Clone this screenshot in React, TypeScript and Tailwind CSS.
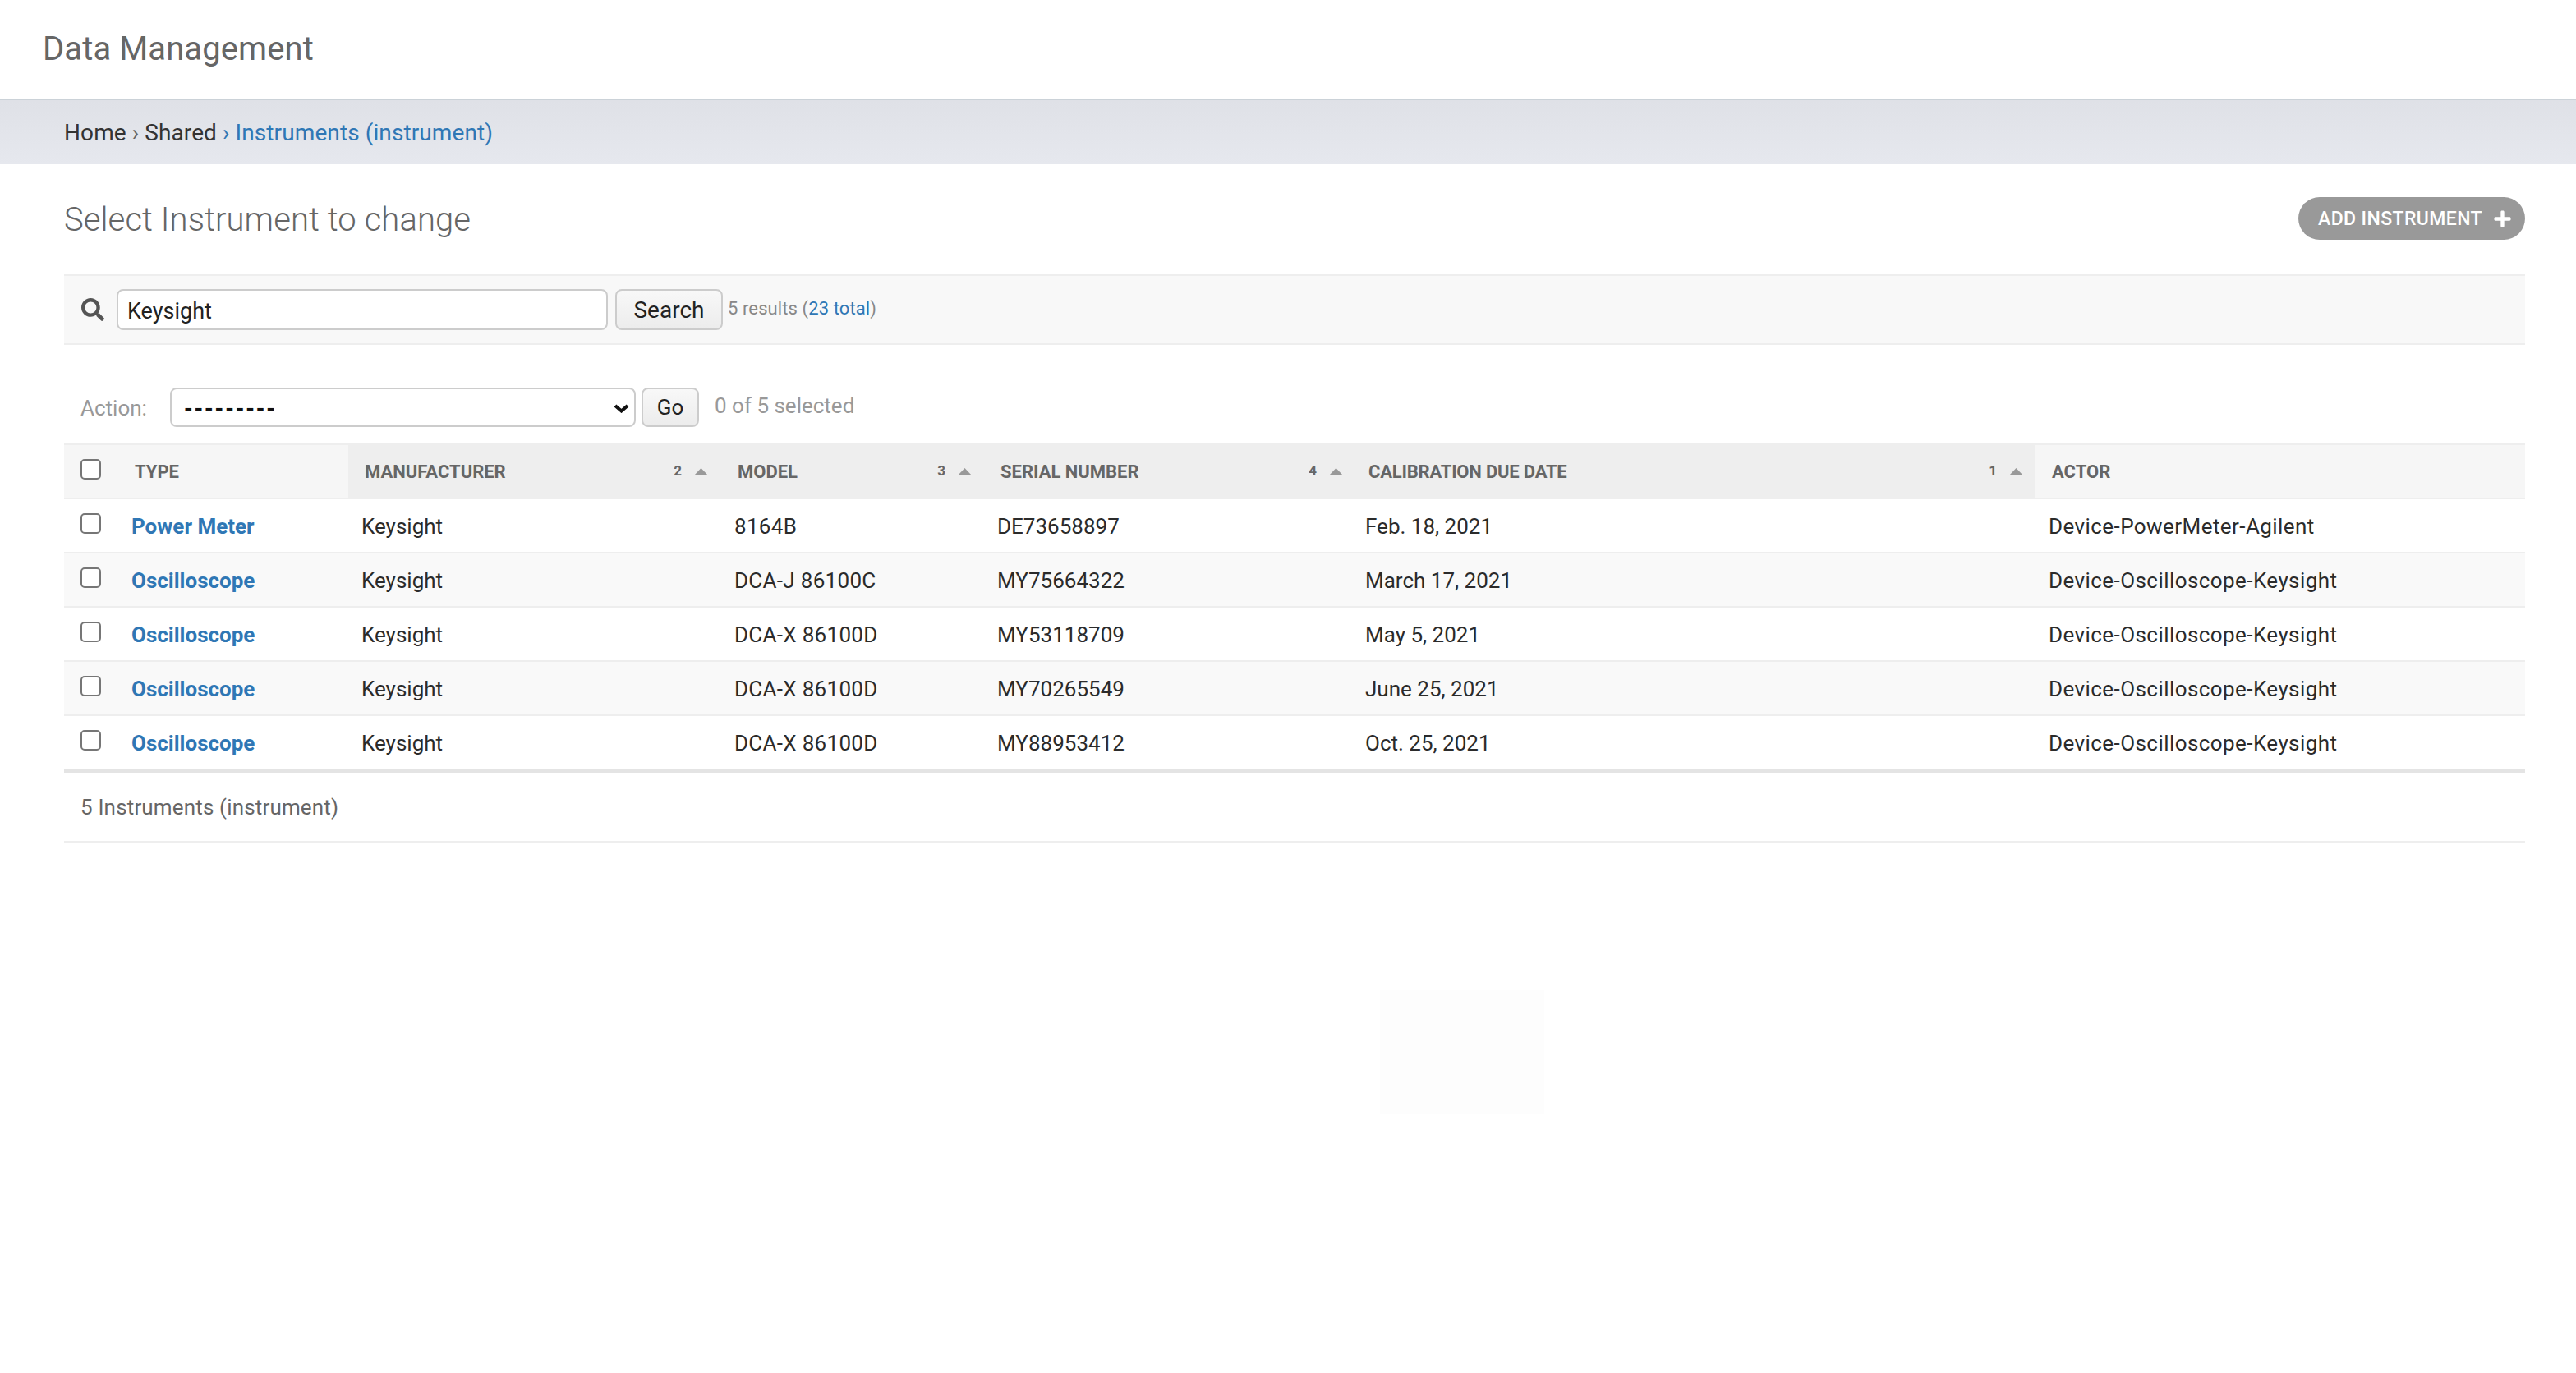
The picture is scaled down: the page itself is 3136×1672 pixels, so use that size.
import { FaSearch, FaPlus } from "react-icons/fa";

type Row = { type: string; model: string; serial: string; date: string; actor: string };

const rows: Row[] = [
  { type: "Power Meter", model: "8164B", serial: "DE73658897", date: "Feb. 18, 2021", actor: "Device-PowerMeter-Agilent" },
  { type: "Oscilloscope", model: "DCA-J 86100C", serial: "MY75664322", date: "March 17, 2021", actor: "Device-Oscilloscope-Keysight" },
  { type: "Oscilloscope", model: "DCA-X 86100D", serial: "MY53118709", date: "May 5, 2021", actor: "Device-Oscilloscope-Keysight" },
  { type: "Oscilloscope", model: "DCA-X 86100D", serial: "MY70265549", date: "June 25, 2021", actor: "Device-Oscilloscope-Keysight" },
  { type: "Oscilloscope", model: "DCA-X 86100D", serial: "MY88953412", date: "Oct. 25, 2021", actor: "Device-Oscilloscope-Keysight" },
];

function Check() {
  return <input type="checkbox" className="block appearance-none w-[25px] h-[25px] -mt-[6px] bg-white border-2 border-[#767676] rounded-[5px]" />;
}

function SortHead({ label, order, pad, labelClass }: { label: string; order: string; pad: string; labelClass?: string }) {
  return (
    <th className="bg-[#eeeeee] border-y-2 border-[#eeeeee] p-0 text-left align-middle">
      <div className={`flex items-center justify-between pl-[20px] ${pad}`}>
        <span className={labelClass}>{label}</span>
        <span className="flex items-center gap-[15px] text-[#666666] text-[17px]">
          {order}
          <svg width="17" height="9" viewBox="0 0 17 9" className="block"><path d="M8.5 0 L17 9 L0 9 Z" fill="#999999" /></svg>
        </span>
      </div>
    </th>
  );
}

export default function App() {
  return (
    <div className="min-h-[1672px] bg-white font-['Roboto',sans-serif] text-[26px] text-[#2b2b2b]">
      <header className="h-[120px] bg-white flex items-center pl-[52px]">
        <div className="text-[40px] text-[#666666] leading-none tracking-[0.1px]">Data Management</div>
      </header>
      <nav className="h-[80px] pl-[78px] pt-[2px] flex items-center text-[28px] tracking-[0.1px] text-[#333333] border-t-[2px] border-[#cbd2d8] bg-gradient-to-b from-[#dfe1e7] to-[#e6e8ee]">
        <span>Home</span>
        <span className="text-[#666666] mx-[7px]">›</span>
        <span>Shared</span>
        <span className="text-[#2f77b5] ml-[7px] mr-[7px]">›</span>
        <span className="text-[#2f77b5]">Instruments (instrument)</span>
      </nav>
      <main className="pr-[62px] pl-[78px]">
        <div className="flex items-center justify-between h-[134px]">
          <h1 className="pt-[2px] text-[40px] font-light text-[#666666] leading-none tracking-[0.08px]">Select Instrument to change</h1>
          <a className="flex items-center h-[52px] w-[276px] mb-[2px] rounded-[26px] bg-[#999999] text-white text-[23px] font-medium tracking-[0.4px] pl-[24px] gap-[13px]">
            <span className="pt-[2px]">ADD INSTRUMENT</span>
            <FaPlus className="w-[23px] h-[23px]" />
          </a>
        </div>
        <div className="h-[86px] flex items-center bg-[#f8f8f8] border-y-2 border-[#eeeeee] pl-[21px]">
          <FaSearch className="w-[28px] h-[28px] text-[#555555]" />
          <input
            defaultValue="Keysight"
            className="ml-[15px] w-[598px] h-[50px] pl-[11px] pt-[3px] bg-white border-2 border-[#cccccc] rounded-[8px] text-[27px] text-[#222222] outline-none"
          />
          <button className="ml-[9px] w-[131px] h-[50px] pt-[2px] border-2 border-[#cccccc] rounded-[8px] bg-gradient-to-b from-[#f8f8f8] to-[#ececec] text-[28px] text-[#222222]">Search</button>
          <span className="ml-[6px] text-[22px] tracking-[0.1px] text-[#888888] -mt-[3px]">5 results (<span className="text-[#2f77b5]">23 total</span>)</span>
        </div>
        <div className="h-[120px] pt-[52px] flex items-start pl-[20px] text-[26px] text-[#999999]">
          <label className="mt-[6px] w-[109px]">Action:</label>
          <div className="relative w-[567px] h-[48px]">
            <select className="block appearance-none w-full h-full pl-[15px] pt-[4px] bg-white border-2 border-[#cccccc] rounded-[8px] text-[27px] font-bold tracking-[1.9px] text-[#111111] outline-none">
              <option>---------</option>
            </select>
            <svg width="19" height="11" viewBox="0 0 19 11" className="absolute left-[540px] top-[20px] pointer-events-none">
              <path d="M2 2 L9.5 8.5 L17 2" fill="none" stroke="#111111" strokeWidth="4" />
            </svg>
          </div>
          <button className="ml-[7px] w-[70px] h-[48px] border-2 border-[#cccccc] rounded-[8px] bg-gradient-to-b from-[#f8f8f8] to-[#ececec] text-[26px] text-[#222222]">Go</button>
          <span className="ml-[19px] mt-[3px]">0 of 5 selected</span>
        </div>
        <table className="w-[2996px] table-fixed border-collapse">
          <colgroup>
            <col className="w-[66px]" />
            <col className="w-[280px]" />
            <col className="w-[454px]" />
            <col className="w-[320px]" />
            <col className="w-[448px]" />
            <col className="w-[832px]" />
            <col className="w-[596px]" />
          </colgroup>
          <thead>
            <tr className="h-[66px] text-[22px] font-bold text-[#666666] uppercase">
              <th className="bg-[#f6f6f6] border-y-2 border-[#eeeeee] pl-[20px] p-0 align-middle"><Check /></th>
              <th className="bg-[#f6f6f6] border-y-2 border-[#eeeeee] pl-[20px] p-0 text-left">TYPE</th>
              <SortHead label="MANUFACTURER" order="2" pad="pr-[16px]" />
              <SortHead label="MODEL" order="3" pad="pr-[15px]" />
              <SortHead label="SERIAL NUMBER" order="4" pad="pr-[11px]" />
              <SortHead label="CALIBRATION DUE DATE" order="1" pad="pr-[15px]" labelClass="tracking-[-0.2px]" />
              <th className="bg-[#f6f6f6] border-y-2 border-[#eeeeee] pl-[20px] p-0 text-left">ACTOR</th>
            </tr>
          </thead>
          <tbody>
            {rows.map((r, i) => (
              <tr key={i} className={`${i === rows.length - 1 ? "h-[68px] border-b-4 border-[#e4e4e4]" : "h-[66px] border-b-2 border-[#eeeeee]"} ${i % 2 === 1 ? "bg-[#f9f9f9]" : "bg-white"}`}>
                <td className="pl-[20px] p-0"><Check /></td>
                <td className="pl-[16px] pt-[2px] pb-0 font-bold text-[#2f77b5]">{r.type}</td>
                <td className="pl-[16px] pt-[2px] pb-0">Keysight</td>
                <td className="pl-[16px] pt-[2px] pb-0 tracking-[0.3px]">{r.model}</td>
                <td className="pl-[16px] pt-[2px] pb-0">{r.serial}</td>
                <td className="pl-[16px] pt-[2px] pb-0">{r.date}</td>
                <td className="pl-[16px] pt-[2px] pb-0 tracking-[0.43px]">{r.actor}</td>
              </tr>
            ))}
          </tbody>
        </table>
        <div className="h-[85px] flex items-center pl-[20px] pt-[2px] border-b-2 border-[#eeeeee] text-[#666666] tracking-[0.16px]">5 Instruments (instrument)</div>
        <div className="mt-[180px] ml-[1602px] w-[200px] h-[150px] bg-[#fdfdfd]" />
      </main>
    </div>
  );
}
